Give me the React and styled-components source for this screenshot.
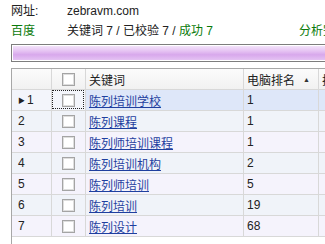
import React from "react";
import styled, { createGlobalStyle } from "styled-components";

const GlobalStyle = createGlobalStyle`
  html, body {
    margin: 0;
    padding: 0;
    background: #ffffff;
    overflow: hidden;
  }
  body {
    font-family: "Liberation Sans", "Noto Sans CJK SC", sans-serif;
    font-size: 12px;
    color: #222222;
  }
`;

const Page = styled.div`
  width: 325px;
  height: 244px;
  overflow: hidden;
  padding: 3px 0 0 11px;
  box-sizing: border-box;
  display: flex;
  flex-direction: column;
`;

const InfoLine = styled.div`
  display: flex;
  height: 16px;
  line-height: 16px;
  margin-bottom: ${(props) => props.gap || 0}px;
  white-space: nowrap;
`;

const Label = styled.span`
  width: 56px;
  flex: none;
  color: ${(props) => (props.green ? "#0a7a0a" : "#222222")};
`;

const Stats = styled.span`
  width: 232px;
  flex: none;
`;

const Green = styled.span`
  color: #0a7a0a;
`;

const Progress = styled.div`
  width: 340px;
  height: 18px;
  box-sizing: border-box;
  border: 1px solid #7d7d7d;
  padding: 1px;
  flex: none;
`;

const ProgressFill = styled.div`
  height: 100%;
  background: linear-gradient(#f3e3fa 0%, #e6c4f3 35%, #d8a8ec 62%, #e4c2f3 100%);
`;

const Grid = styled.div`
  margin-top: 6px;
  flex: 1;
  width: 400px;
  border-top: 1px solid #a7a7a7;
  border-left: 1px solid #a7a7a7;
`;

const Row = styled.div`
  display: grid;
  grid-template-columns: 40px 34px 158px 75px 80px;
  height: 21px;
  background: ${(props) => props.bg};
`;

const Cell = styled.div`
  box-sizing: border-box;
  border-right: 1px solid #d8d8d8;
  border-bottom: 1px solid #d8d8d8;
  display: flex;
  align-items: center;
  padding-left: ${(props) => props.pad ?? 3}px;
  white-space: nowrap;
  overflow: hidden;
  background: ${(props) => props.bg || "transparent"};
  justify-content: ${(props) => (props.center ? "center" : "flex-start")};
  position: relative;
`;

const HeadCell = styled(Cell)`
  background: linear-gradient(#fbfbfb, #f1f1f1);
  color: #222222;
  justify-content: ${(props) => (props.center ? "center" : "space-between")};
`;

const SortArrow = styled.span`
  font-size: 7px;
  color: #333333;
  margin-right: 8px;
`;

const RowMarker = styled.span`
  width: 9px;
  flex: none;
  font-size: 7px;
  color: #222222;
`;

const FocusBox = styled.div`
  position: absolute;
  inset: 0 1px 1px 0;
  border: 1px dotted #222222;
`;

const Box = styled.span`
  width: 13px;
  height: 13px;
  box-sizing: border-box;
  border: 1px solid #a4a4a4;
  background: #ffffff;
  box-shadow: inset 0 0 0 1px #dedede;
  display: inline-block;
`;

const Keyword = styled.a`
  color: #1f3f9f;
  text-decoration: underline;
  cursor: pointer;
`;

const rows = [
  { n: 1, kw: "陈列培训学校", rank: "1" },
  { n: 2, kw: "陈列课程", rank: "1" },
  { n: 3, kw: "陈列师培训课程", rank: "1" },
  { n: 4, kw: "陈列培训机构", rank: "2" },
  { n: 5, kw: "陈列师培训", rank: "5" },
  { n: 6, kw: "陈列培训", rank: "19" },
  { n: 7, kw: "陈列设计", rank: "68" },
];

function rowColor(n) {
  if (n === 1) return "#f3f5fb";
  return n % 2 === 0 ? "#f0f3f9" : "#f5f3fc";
}

export default function App() {
  return (
    <>
      <GlobalStyle />
      <Page>
        <InfoLine gap={4}>
          <Label>网址:</Label>
          <span>zebravm.com</span>
        </InfoLine>
        <InfoLine gap={5}>
          <Label green>百度</Label>
          <Stats>
            关键词 7 / 已校验 7 / <Green>成功 7</Green>
          </Stats>
          <Green>分析完成</Green>
        </InfoLine>
        <Progress>
          <ProgressFill />
        </Progress>
        <Grid>
          <Row bg="#f4f4f4">
            <HeadCell />
            <HeadCell center pad={0}>
              <Box />
            </HeadCell>
            <HeadCell>关键词</HeadCell>
            <HeadCell>
              电脑排名
              <SortArrow>▲</SortArrow>
            </HeadCell>
            <HeadCell>排名</HeadCell>
          </Row>
          {rows.map((r) => {
            const selected = r.n === 1;
            const bg = rowColor(r.n);
            return (
              <Row key={r.n} bg={bg}>
                <Cell pad={6}>
                  {selected && <RowMarker>▶</RowMarker>}
                  {r.n}
                </Cell>
                <Cell center pad={0}>
                  {selected && <FocusBox />}
                  <Box />
                </Cell>
                <Cell bg={selected ? "#dee7f9" : undefined}>
                  <Keyword>{r.kw}</Keyword>
                </Cell>
                <Cell bg={selected ? "#dee7f9" : undefined}>{r.rank}</Cell>
                <Cell bg={selected ? "#dee7f9" : undefined} />
              </Row>
            );
          })}
        </Grid>
      </Page>
    </>
  );
}
